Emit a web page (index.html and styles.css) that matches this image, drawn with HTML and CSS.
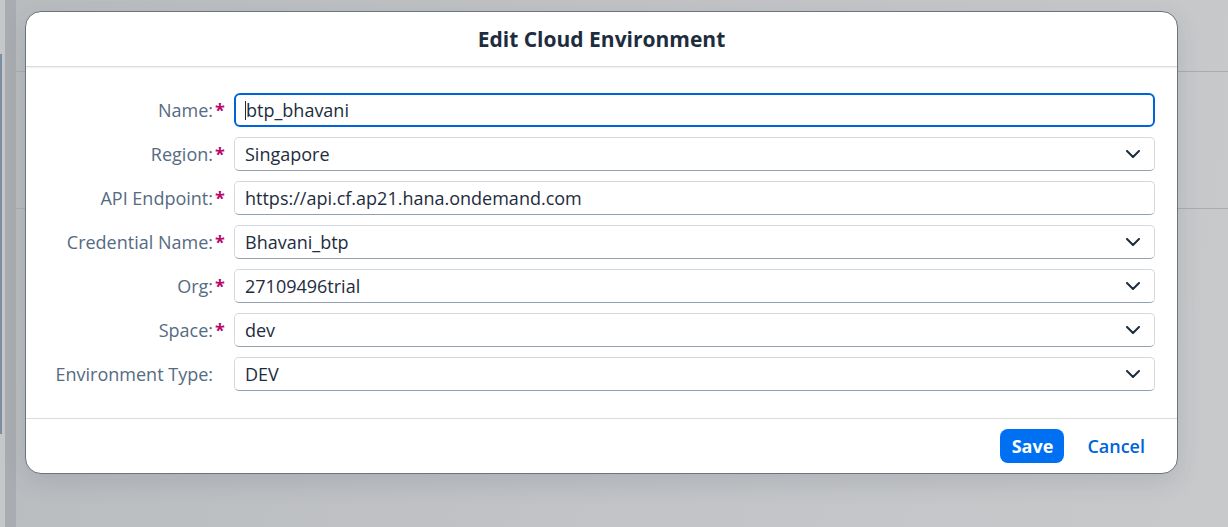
FILE: index.html
```html
<!DOCTYPE html>
<html lang="en">
<head>
<meta charset="utf-8">
<title>Edit Cloud Environment</title>
<link rel="stylesheet" href="styles.css">
</head>
<body>
<div class="page">
  <div class="rail-outer"><div class="rail-accent"></div></div>
  <div class="rail-inner"></div>
  <div class="page-main">
    <div class="page-header"></div>
    <div class="page-section"></div>
  </div>
</div>

<div class="overlay">
  <div class="dialog" role="dialog" aria-labelledby="dlg-title">
    <header class="dialog-header">
      <h1 id="dlg-title" class="dialog-title">Edit Cloud Environment</h1>
    </header>
    <div class="dialog-content">
      <form class="form-grid">
        <label class="form-label">Name:<span class="req">*</span></label>
        <div class="field field-focus"><span class="caret"></span><span class="field-text">btp_bhavani</span></div>

        <label class="form-label">Region:<span class="req">*</span></label>
        <div class="field"><span class="field-text">Singapore</span><svg class="chev" viewBox="0 0 14 8" width="14" height="8"><path d="M1 1 L7 7 L13 1" fill="none" stroke="#1d2d3e" stroke-width="2" stroke-linecap="round" stroke-linejoin="round"/></svg></div>

        <label class="form-label">API Endpoint:<span class="req">*</span></label>
        <div class="field"><span class="field-text">https://api.cf.ap21.hana.ondemand.com</span></div>

        <label class="form-label">Credential Name:<span class="req">*</span></label>
        <div class="field"><span class="field-text">Bhavani_btp</span><svg class="chev" viewBox="0 0 14 8" width="14" height="8"><path d="M1 1 L7 7 L13 1" fill="none" stroke="#1d2d3e" stroke-width="2" stroke-linecap="round" stroke-linejoin="round"/></svg></div>

        <label class="form-label">Org:<span class="req">*</span></label>
        <div class="field"><span class="field-text">27109496trial</span><svg class="chev" viewBox="0 0 14 8" width="14" height="8"><path d="M1 1 L7 7 L13 1" fill="none" stroke="#1d2d3e" stroke-width="2" stroke-linecap="round" stroke-linejoin="round"/></svg></div>

        <label class="form-label">Space:<span class="req">*</span></label>
        <div class="field"><span class="field-text">dev</span><svg class="chev" viewBox="0 0 14 8" width="14" height="8"><path d="M1 1 L7 7 L13 1" fill="none" stroke="#1d2d3e" stroke-width="2" stroke-linecap="round" stroke-linejoin="round"/></svg></div>

        <label class="form-label">Environment Type:<span class="req"></span></label>
        <div class="field"><span class="field-text">DEV</span><svg class="chev" viewBox="0 0 14 8" width="14" height="8"><path d="M1 1 L7 7 L13 1" fill="none" stroke="#1d2d3e" stroke-width="2" stroke-linecap="round" stroke-linejoin="round"/></svg></div>
      </form>
    </div>
    <footer class="dialog-footer">
      <button class="btn btn-emph" type="button">Save</button>
      <button class="btn btn-trans" type="button">Cancel</button>
    </footer>
  </div>
</div>
</body>
</html>
```

FILE: styles.css
```css
* { box-sizing: border-box; }

html, body {
  margin: 0;
  padding: 0;
  width: 1228px;
  height: 527px;
  overflow: hidden;
}

body {
  font-family: "Open Sans", "Noto Sans", Arial, sans-serif;
  background: linear-gradient(100deg, #b9bcbf 0%, #c1c3c6 50%, #c8c9cb 100%);
  position: relative;
}

/* Background page (dimmed by overlay) */
.page {
  display: flex;
  height: 527px;
}

.rail-outer {
  width: 5px;
  background: #c5c7c9;
  padding-top: 54px;
}

.rail-accent {
  width: 2px;
  height: 380px;
  background: #7d8ea3;
}

.rail-inner {
  width: 11px;
  background: #a9adb1;
}

.page-main {
  flex: 1;
  display: flex;
  flex-direction: column;
}

.page-header {
  height: 72px;
  border-bottom: 1px solid #a9adb1;
}

.page-section {
  height: 137px;
  border-bottom: 1px solid #a9adb1;
}

/* Overlay + dialog */
.overlay {
  position: absolute;
  inset: 0;
}

.dialog {
  position: absolute;
  left: 25px;
  top: 11px;
  width: 1153px;
  height: 463px;
  background: #ffffff;
  border: 1px solid #6b737c;
  border-radius: 16px;
  box-shadow: 0 8px 24px rgba(34, 53, 72, 0.12);
  display: flex;
  flex-direction: column;
  overflow: hidden;
}

.dialog-header {
  height: 55px;
  flex: 0 0 55px;
  display: flex;
  align-items: center;
  justify-content: center;
  border-bottom: 1px solid #d9dcdf;
  box-shadow: 0 1px 2px rgba(34, 53, 72, 0.08);
  position: relative;
  z-index: 1;
}

.dialog-title {
  margin: 0;
  font-size: 21px;
  font-weight: 700;
  color: #1d2d3e;
}

.dialog-content {
  flex: 1;
  padding: 26px 22px 0 0;
}

.form-grid {
  display: grid;
  grid-template-columns: 199px 1fr;
  column-gap: 9px;
  row-gap: 10px;
  margin: 0;
}

.form-label {
  display: flex;
  align-items: center;
  justify-content: flex-end;
  height: 34px;
  font-size: 18px;
  color: #556b82;
  white-space: nowrap;
}

.req {
  display: inline-block;
  width: 12px;
  padding-left: 2px;
  color: #ba066c;
  font-weight: 700;
}

.field {
  height: 34px;
  display: flex;
  align-items: center;
  background: #ffffff;
  border: 1px solid #d3d9df;
  border-bottom-color: #93a1ae;
  border-radius: 5px;
  padding: 0 14px 0 10px;
  font-size: 18px;
  color: #1d2d3e;
}

.field-text {
  flex: 1;
  white-space: nowrap;
}

.field-focus {
  border: 2px solid #0064d9;
  border-radius: 6px;
  padding-left: 9px;
}

.caret {
  width: 1px;
  height: 19px;
  background: #1d2d3e;
}

.chev {
  flex: 0 0 auto;
  display: block;
}

.dialog-footer {
  height: 55px;
  flex: 0 0 55px;
  border-top: 1px solid #d9dcdf;
  display: flex;
  align-items: center;
  justify-content: flex-end;
  gap: 12px;
  padding: 0 21px 0 0;
}

.btn {
  font-family: "Open Sans", "Noto Sans", Arial, sans-serif;
  font-size: 18px;
  height: 34px;
  border-radius: 8px;
  border: 0;
  padding: 0 11px;
  cursor: pointer;
  line-height: 34px;
}

.btn-emph {
  background: #0070f2;
  color: #ffffff;
  font-weight: 700;
  padding: 0 11px 0 12px;
}

.btn-trans {
  background: transparent;
  color: #0064d9;
  font-weight: 600;
}
```
